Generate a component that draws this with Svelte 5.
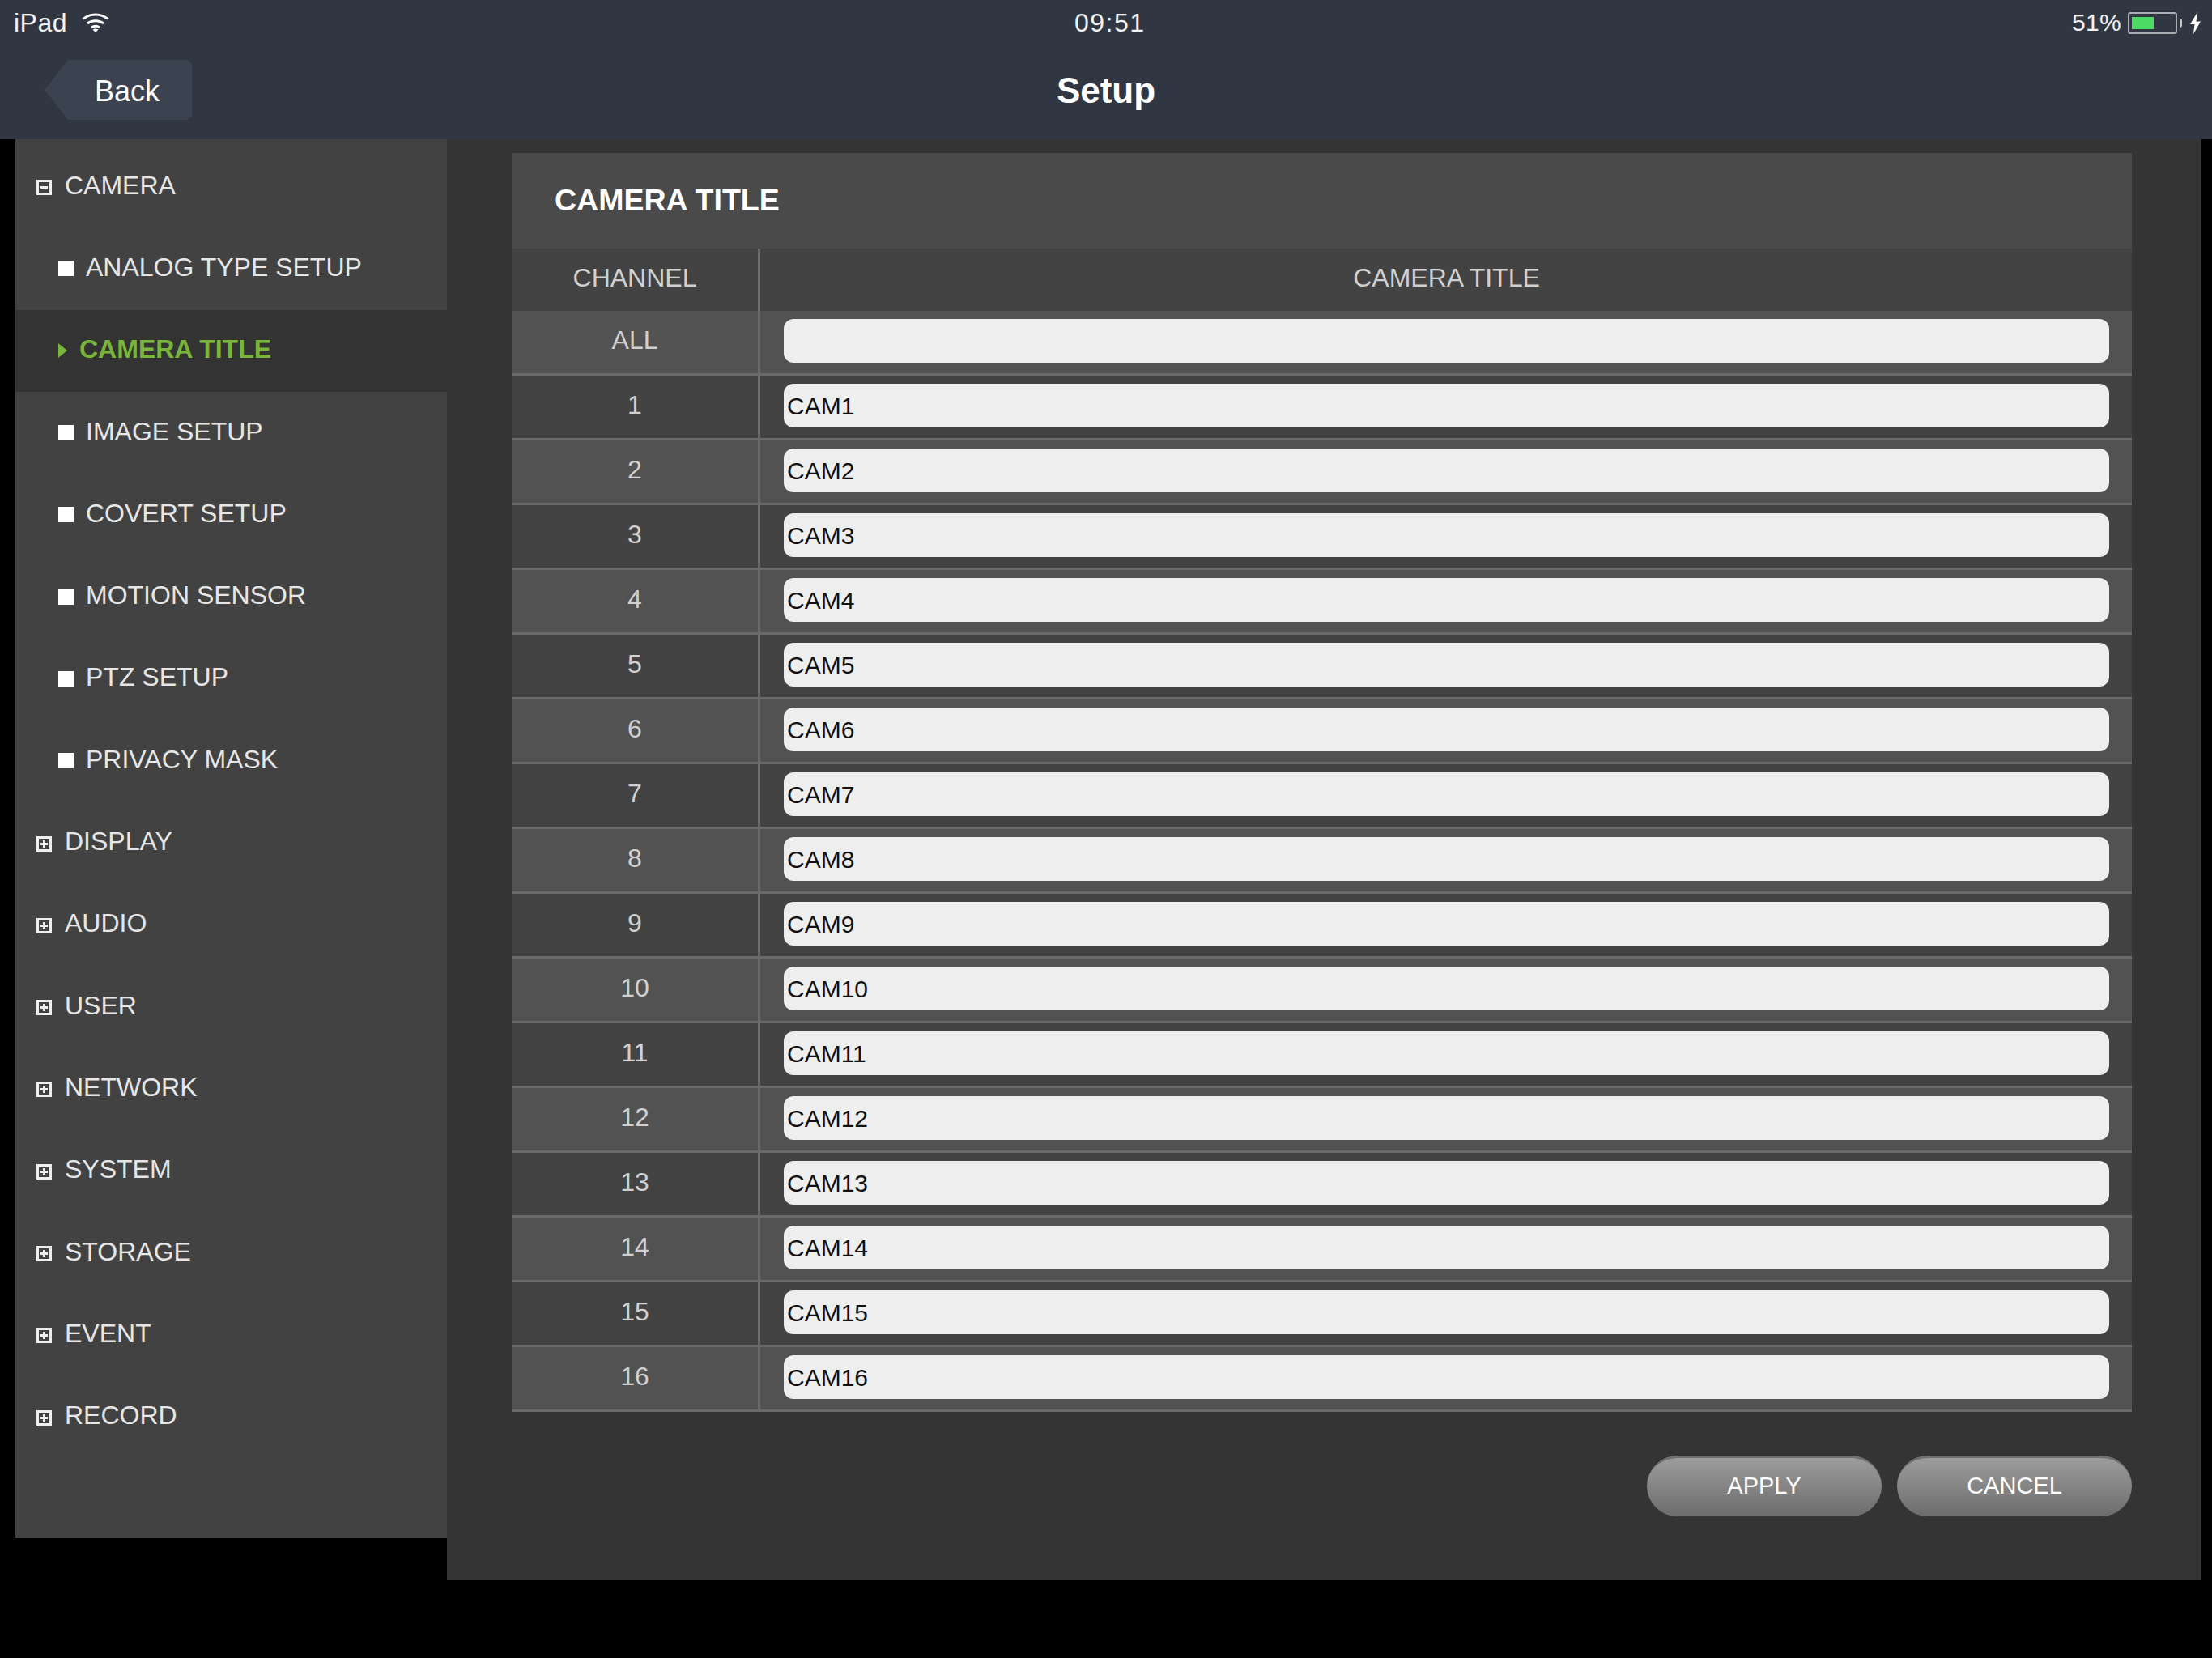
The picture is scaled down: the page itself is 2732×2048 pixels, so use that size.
<script>
  const menu = [
    { t: 'CAMERA', k: 'minus' },
    { t: 'ANALOG TYPE SETUP', k: 'sub' },
    { t: 'CAMERA TITLE', k: 'active' },
    { t: 'IMAGE SETUP', k: 'sub' },
    { t: 'COVERT SETUP', k: 'sub' },
    { t: 'MOTION SENSOR', k: 'sub' },
    { t: 'PTZ SETUP', k: 'sub' },
    { t: 'PRIVACY MASK', k: 'sub' },
    { t: 'DISPLAY', k: 'plus' },
    { t: 'AUDIO', k: 'plus' },
    { t: 'USER', k: 'plus' },
    { t: 'NETWORK', k: 'plus' },
    { t: 'SYSTEM', k: 'plus' },
    { t: 'STORAGE', k: 'plus' },
    { t: 'EVENT', k: 'plus' },
    { t: 'RECORD', k: 'plus' }
  ];
  const rows = [{ c: 'ALL', v: '' }];
  for (let i = 1; i <= 16; i++) rows.push({ c: String(i), v: 'CAM' + i });
</script>

<div class="page">
  <header class="top">
    <div class="status">
      <div class="st-left">
        <span class="dev">iPad</span>
        <svg class="wifi" viewBox="0 0 34 24" width="34" height="24" fill="none" stroke="#fff" stroke-width="3">
          <path d="M1.5 7.5C10 0 24 0 32.500 7.500" />
          <path d="M7 13C12.500 8.500 21.500 8.500 27 13" />
          <path d="M12 18C15 16 19 16 22 18" />
          <path d="M17 24L13.500 20.500C15.500 19.300 18.500 19.300 20.500 20.500Z" fill="#fff" stroke="none" />
        </svg>
      </div>
      <div class="clock">09:51</div>
      <div class="st-right">
        <span class="pct">51%</span>
        <span class="battery"><span class="charge"></span></span>
        <span class="nub"></span>
        <svg class="bolt" viewBox="0 0 15 27" width="15" height="27"><path d="M10 0L1 15H6.500L5 27L14 11.500H8.500Z" fill="#fff" /></svg>
      </div>
    </div>
    <div class="nav">
      <div class="back">Back</div>
      <div class="nav-title">Setup</div>
    </div>
  </header>

  <div class="body">
    <nav class="side">
      {#each menu as m}
        <div class="item {m.k}">
          {#if m.k === 'minus' || m.k === 'plus'}
            <span class="box"><span class="h"></span>{#if m.k === 'plus'}<span class="v"></span>{/if}</span>
          {:else if m.k === 'sub'}
            <span class="sq"></span>
          {:else}
            <span class="tri"></span>
          {/if}
          <span>{m.t}</span>
        </div>
      {/each}
    </nav>

    <main class="main">
      <section class="panel">
        <h1>CAMERA TITLE</h1>
        <div class="row head">
          <div class="ch">CHANNEL</div>
          <div class="ti">CAMERA TITLE</div>
        </div>
        {#each rows as r, i}
          <div class="row" class:alt={i % 2 === 0}>
            <div class="ch">{r.c}</div>
            <div class="ti"><input type="text" value={r.v} /></div>
          </div>
        {/each}
      </section>
      <div class="actions">
        <button>APPLY</button>
        <button>CANCEL</button>
      </div>
    </main>
  </div>
</div>

<style>
  :global(body) {
    margin: 0;
    background: #000;
  }
  .page {
    width: 2732px;
    height: 2048px;
    background: #000;
    font-family: "Liberation Sans", Arial, sans-serif;
    overflow: hidden;
  }
  .top {
    height: 172px;
    background: #303742;
    color: #fff;
    box-sizing: border-box;
    position: relative;
  }
  .status {
    height: 56px;
    display: flex;
    align-items: center;
    justify-content: space-between;
    padding: 0 13px 0 17px;
    font-size: 32px;
    color: #f2f2f2;
    position: relative;
  }
  .dev {
    letter-spacing: 0.500px;
  }
  .st-left {
    display: flex;
    align-items: center;
    gap: 18px;
  }
  .clock {
    position: absolute;
    left: 1327px;
    top: 10px;
    font-size: 32px;
    line-height: 36px;
    letter-spacing: 1.500px;
  }
  .st-right {
    display: flex;
    align-items: center;
  }
  .pct {
    font-size: 30px;
    margin-right: 8px;
    letter-spacing: 0.300px;
  }
  .battery {
    width: 61px;
    height: 27px;
    box-sizing: border-box;
    border: 2px solid #a9adb2;
    border-radius: 3px;
    padding: 4px 3px;
    display: block;
  }
  .charge {
    display: block;
    width: 27px;
    height: 15px;
    background: #4cd964;
  }
  .nub {
    width: 3px;
    height: 11px;
    background: #c9cbce;
    margin: 0 9px 0 3px;
    border-radius: 0 3px 3px 0;
  }
  .nav {
    height: 116px;
    position: relative;
  }
  .back {
    position: absolute;
    left: 55px;
    top: 20px;
    width: 182px;
    height: 74px;
    background: #3c4350;
    clip-path: polygon(16% 0, 97% 0, 100% 6%, 100% 94%, 97% 100%, 16% 100%, 0 50%);
    box-sizing: border-box;
    padding-left: 62px;
    font-size: 36px;
    line-height: 77px;
  }
  .nav-title {
    text-align: center;
    font-size: 44px;
    font-weight: 700;
    line-height: 116px;
    margin-top: -2px;
    height: 116px;
  }
  .body {
    display: flex;
    align-items: flex-start;
    padding-left: 19px;
    border-top: 1px solid #555;
    margin-top: -1px;
    width: 2719px;
    box-sizing: border-box;
  }
  .side {
    width: 533px;
    height: 1728px;
    box-sizing: border-box;
    background: #424242;
    padding-top: 8px;
    flex: none;
  }
  .item {
    height: 101.300px;
    display: flex;
    align-items: center;
    color: #e6e6e6;
    font-size: 32px;
    line-height: 32px;
    padding-bottom: 4px;
    box-sizing: border-box;
  }
  .minus,
  .plus {
    padding-left: 26px;
    gap: 16px;
  }
  .sub {
    padding-left: 53px;
    gap: 15px;
  }
  .active {
    padding-left: 53px;
    gap: 15px;
    background: #333;
    color: #79b53a;
    font-weight: 700;
  }
  .box {
    width: 19px;
    height: 19px;
    box-sizing: border-box;
    border: 3px solid #eee;
    position: relative;
    flex: none;
    margin-top: 6px;
  }
  .box .h {
    position: absolute;
    left: 2px;
    right: 2px;
    top: 5px;
    height: 3px;
    background: #eee;
  }
  .box .v {
    position: absolute;
    top: 2px;
    bottom: 2px;
    left: 5px;
    width: 3px;
    background: #eee;
  }
  .sq {
    width: 19px;
    height: 19px;
    background: #fff;
    flex: none;
    margin-top: 4px;
  }
  .tri {
    width: 0;
    height: 0;
    border-left: 11px solid #79b53a;
    border-top: 9px solid transparent;
    border-bottom: 9px solid transparent;
    flex: none;
    margin-top: 4px;
  }
  .main {
    width: 2167px;
    height: 1780px;
    box-sizing: border-box;
    background: #343434;
    padding: 17px 86px 0 80px;
    flex: none;
  }
  .panel h1 {
    margin: 0;
    height: 118px;
    background: #4a4a4a;
    color: #fff;
    font-size: 37.500px;
    font-weight: 700;
    line-height: 116px;
    padding-left: 53px;
    box-sizing: border-box;
  }
  .row {
    display: flex;
    height: 80px;
    box-sizing: border-box;
    background: #434343;
    border-bottom: 3px solid #6a6a6a;
    color: #d0d0d0;
    font-size: 32px;
  }
  .row.alt {
    background: #525252;
  }
  .row.head {
    height: 77px;
    border-bottom: none;
  }
  .ch {
    width: 307px;
    box-sizing: border-box;
    text-align: center;
    line-height: 72px;
    border-right: 3px solid #6a6a6a;
    flex: none;
  }
  .ti {
    flex: 1;
    padding: 10px 28px 0 29px;
    text-align: center;
    line-height: 52px;
  }
  .head .ch,
  .head .ti {
    line-height: 72px;
  }
  .head .ti {
    padding-top: 0;
  }
  input {
    display: block;
    width: 100%;
    height: 54px;
    box-sizing: border-box;
    border: none;
    outline: none;
    background: #eee;
    border-radius: 12px;
    padding: 2px 0 0 4px;
    margin: 0;
    font-family: "Liberation Sans", Arial, sans-serif;
    font-size: 30px;
    color: #111;
  }
  .actions {
    display: flex;
    justify-content: flex-end;
    gap: 19px;
    margin-top: 54px;
  }
  button {
    width: 290px;
    height: 75px;
    border: none;
    border-top: 3px solid #707070;
    border-radius: 38px;
    background: linear-gradient(#9c9c9c, #6c6c6c);
    color: #fff;
    font-family: "Liberation Sans", Arial, sans-serif;
    font-size: 29px;
    padding: 0 0 3px;
  }
</style>
